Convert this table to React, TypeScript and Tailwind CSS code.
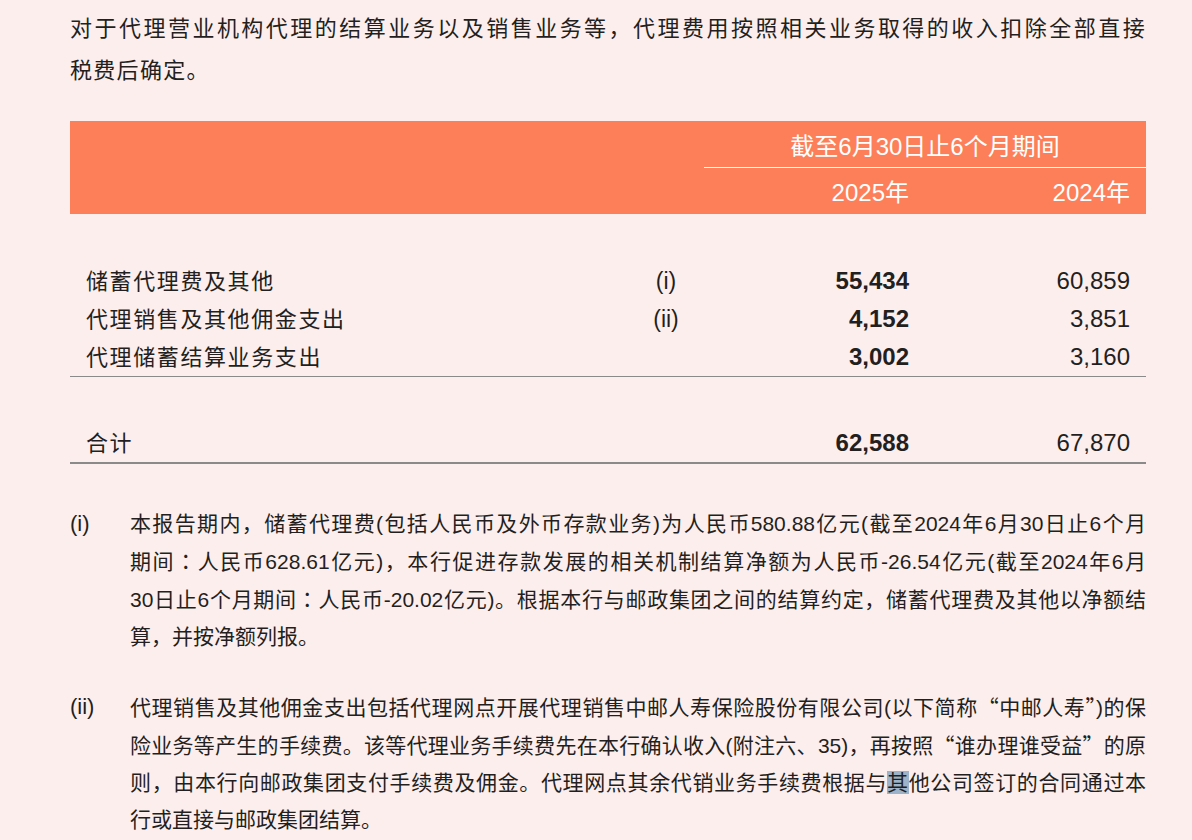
const rows = [
  { label: "储蓄代理费及其他", note: "(i)", cur: "55,434", prev: "60,859" },
  { label: "代理销售及其他佣金支出", note: "(ii)", cur: "4,152", prev: "3,851" },
  { label: "代理储蓄结算业务支出", note: "", cur: "3,002", prev: "3,160" },
];

function Line({ children, last = false }: { children: React.ReactNode; last?: boolean }) {
  return (
    <div className={last ? "whitespace-nowrap" : "whitespace-nowrap text-justify [text-align-last:justify]"}>
      {children}
    </div>
  );
}

function Q({ children }: { children: React.ReactNode }) {
  return <span className="font-['Noto_Sans_CJK_SC',sans-serif]">{children}</span>;
}

// colon centred, as in the print
function Colon() {
  return <span className="font-['Noto_Sans_CJK_TC',sans-serif]">：</span>;
}

export default function App() {
  return (
    <div className="min-h-[840px] w-[1192px] bg-[#fdeeee] font-['Liberation_Sans','Noto_Sans_CJK_SC',sans-serif] text-[#231f20]">
      <div className="ml-[70px] w-[1076px] pt-[8px]">
        {/* intro */}
        <div className="text-[22px] leading-[42px] tracking-[1.3px]">
          <Line>对于代理营业机构代理的结算业务以及销售业务等，代理费用按照相关业务取得的收入扣除全部直接</Line>
          <Line last>税费后确定。</Line>
        </div>

        {/* table head */}
        <div className="mt-[29px] flex h-[93px] bg-[#fd7f59] text-[24px] text-white">
          <div className="w-[634px]" />
          <div className="flex w-[442px] flex-col">
            <div className="flex h-[46px] items-center justify-center pt-[5px] leading-none">截至6月30日止6个月期间</div>
            <div className="h-px bg-white" />
            <div className="flex h-[46px] items-center pt-[4px] pr-[16px] leading-none">
              <div className="w-[205px] text-right">2025年</div>
              <div className="w-[221px] text-right">2024年</div>
            </div>
          </div>
        </div>

        {/* table body */}
        <div className="mt-[48px] border-b border-[#8a8a8a]">
          {rows.map((r) => (
            <div key={r.label} className="flex h-[38px] items-center pr-[16px]">
              <div className="w-[564px] pl-4 text-[22px] tracking-[1.6px]">{r.label}</div>
              <div className="w-[64px] text-center text-[23px]">{r.note}</div>
              <div className="w-[211px] text-right text-[24px] font-bold">{r.cur}</div>
              <div className="w-[221px] text-right text-[24px]">{r.prev}</div>
            </div>
          ))}
        </div>

        <div className="mt-[47px] box-content flex h-[38px] items-center border-b-2 border-[#8a8a8a] pr-[16px]">
          <div className="w-[564px] pl-4 text-[22px] tracking-[1.6px]">合计</div>
          <div className="w-[64px]" />
          <div className="w-[211px] text-right text-[24px] font-bold">62,588</div>
          <div className="w-[221px] text-right text-[24px]">67,870</div>
        </div>

        {/* notes */}
        <div className="mt-[41px] flex text-[21px] leading-[37px]">
          <div className="w-[60px] text-[22px]">(i)</div>
          <div className="w-[1016px]">
            <Line>本报告期内，储蓄代理费(包括人民币及外币存款业务)为人民币580.88亿元(截至2024年6月30日止6个月</Line>
            <Line>期间<Colon />人民币628.61亿元)，本行促进存款发展的相关机制结算净额为人民币-26.54亿元(截至2024年6月</Line>
            <Line>30日止6个月期间<Colon />人民币-20.02亿元)。根据本行与邮政集团之间的结算约定，储蓄代理费及其他以净额结</Line>
            <Line last>算，并按净额列报。</Line>
          </div>
        </div>

        <div className="mt-[33px] flex text-[21px] leading-[37px]">
          <div className="w-[60px] text-[22px]">(ii)</div>
          <div className="w-[1016px]">
            <Line>代理销售及其他佣金支出包括代理网点开展代理销售中邮人寿保险股份有限公司(以下简称<Q>“</Q>中邮人寿<Q>”</Q>)的保</Line>
            <Line>险业务等产生的手续费。该等代理业务手续费先在本行确认收入(附注六、35)，再按照<Q>“</Q>谁办理谁受益<Q>”</Q>的原</Line>
            <Line>
              则，由本行向邮政集团支付手续费及佣金。代理网点其余代销业务手续费根据与<span className="bg-[#9cb3c9]">其</span>他公司签订的合同通过本
            </Line>
            <Line last>行或直接与邮政集团结算。</Line>
          </div>
        </div>
      </div>
    </div>
  );
}
